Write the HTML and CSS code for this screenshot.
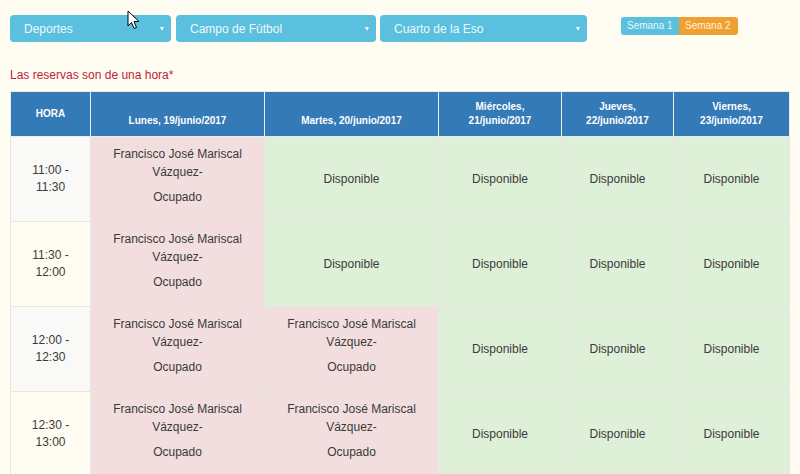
FILE: index.html
```html
<!DOCTYPE html>
<html lang="es">
<head>
<meta charset="utf-8">
<title>Reservas</title>
<link rel="stylesheet" href="styles.css">
</head>
<body>
<div class="page">
  <div class="toolbar">
    <div class="select s1"><span>Deportes</span><i class="caret"></i></div>
    <div class="select s2"><span>Campo de Fútbol</span><i class="caret"></i></div>
    <div class="select s3"><span>Cuarto de la Eso</span><i class="caret"></i></div>
    <div class="weeks">
      <span class="wk wk1">Semana 1</span><span class="wk wk2">Semana 2</span>
    </div>
  </div>
  <p class="notice">Las reservas son de una hora*</p>
  <table class="grid">
    <colgroup>
      <col class="c-hora"><col class="c-lun"><col class="c-mar"><col class="c-mie"><col class="c-jue"><col class="c-vie">
    </colgroup>
    <thead>
      <tr>
        <th class="th-hora">HORA</th>
        <th>Lunes, 19/junio/2017</th>
        <th>Martes, 20/junio/2017</th>
        <th>Miércoles, 21/junio/2017</th>
        <th>Jueves, 22/junio/2017</th>
        <th>Viernes, 23/junio/2017</th>
      </tr>
    </thead>
    <tbody>
      <tr class="odd">
        <td class="hora">11:00 - 11:30</td>
        <td class="busy">Francisco José Mariscal Vázquez-<div class="st">Ocupado</div></td>
        <td class="free">Disponible</td>
        <td class="free">Disponible</td>
        <td class="free">Disponible</td>
        <td class="free">Disponible</td>
      </tr>
      <tr>
        <td class="hora">11:30 - 12:00</td>
        <td class="busy">Francisco José Mariscal Vázquez-<div class="st">Ocupado</div></td>
        <td class="free">Disponible</td>
        <td class="free">Disponible</td>
        <td class="free">Disponible</td>
        <td class="free">Disponible</td>
      </tr>
      <tr class="odd">
        <td class="hora">12:00 - 12:30</td>
        <td class="busy">Francisco José Mariscal Vázquez-<div class="st">Ocupado</div></td>
        <td class="busy">Francisco José Mariscal Vázquez-<div class="st">Ocupado</div></td>
        <td class="free">Disponible</td>
        <td class="free">Disponible</td>
        <td class="free">Disponible</td>
      </tr>
      <tr>
        <td class="hora">12:30 - 13:00</td>
        <td class="busy">Francisco José Mariscal Vázquez-<div class="st">Ocupado</div></td>
        <td class="busy">Francisco José Mariscal Vázquez-<div class="st">Ocupado</div></td>
        <td class="free">Disponible</td>
        <td class="free">Disponible</td>
        <td class="free">Disponible</td>
      </tr>
    </tbody>
  </table>
</div>
<svg class="cursor" width="13" height="20" viewBox="0 0 13 20"><path d="M1 1 L1 16 L4.5 12.5 L7 18.5 L9.5 17.5 L7 11.5 L12 11.5 Z" fill="#fff" stroke="#000" stroke-width="1" stroke-linejoin="round"/></svg>
</body>
</html>
```

FILE: styles.css
```css
html, body {
  margin: 0;
  padding: 0;
  background: #fffdf2;
  font-family: "Liberation Sans", Arial, sans-serif;
  color: #3a3a3a;
}
.page {
  padding: 15px 10px 0 10px;
}
.toolbar {
  display: flex;
  align-items: flex-start;
  gap: 4px;
}
.select {
  height: 27px;
  box-sizing: border-box;
  background: #5bc0de;
  border-radius: 4px;
  color: #eef8fc;
  font-size: 12px;
  display: flex;
  align-items: center;
  justify-content: space-between;
  padding: 0 7px 0 14px;
}
.s1 { width: 161px; margin-right: 1px; }
.s2 { width: 200px; }
.s3 { width: 207px; }
.caret {
  width: 0;
  height: 0;
  border-left: 2.5px solid transparent;
  border-right: 2.5px solid transparent;
  border-top: 4px solid #f4fbfd;
}
.weeks {
  margin-left: 30px;
  margin-top: 2px;
  display: flex;
}
.wk {
  font-size: 10px;
  line-height: 18px;
  height: 18px;
  padding: 0 5px 0 6px;
  color: #e9f6fb;
}
.wk1 { background: #5bc0de; border-radius: 3px 0 0 3px; width: 47px; }
.wk2 { background: #f0a030; color: #fff3df; border-radius: 0 3px 3px 0; width: 48px; }
.notice {
  margin: 24px 0 7px 0;
  font-size: 12px;
  line-height: 18px;
  color: #c0223b;
}
.grid {
  width: 779px;
  table-layout: fixed;
  border-collapse: collapse;
  border: 1px solid #dcdcd2;
}
.c-hora { width: 80px; }
.c-lun { width: 174px; }
.c-mar { width: 174px; }
.c-mie { width: 123px; }
.c-jue { width: 112px; }
.c-vie { width: 116px; }
.grid th {
  background: #337ab7;
  color: #fff;
  font-size: 10px;
  font-weight: bold;
  line-height: 14px;
  padding: 8px;
  vertical-align: bottom;
  border: 1px solid #e8ecee;
  height: 28px;
}
.grid th.th-hora { vertical-align: middle; }
.grid td {
  font-size: 12px;
  line-height: 18px;
  text-align: center;
  vertical-align: middle;
  padding: 8px;
  border: 1px solid #e6e6de;
}
.grid td.hora {
  line-height: 17px;
  background: transparent;
  padding: 8px 10px;
}
.grid tr.odd td.hora { background: #f9f9f7; }
.grid td.busy { background: #f2dede; }
.grid td.free { background: #dff0d8; }
.st { margin: 7px 0; }
.cursor {
  position: absolute;
  left: 127px;
  top: 10px;
}
```
